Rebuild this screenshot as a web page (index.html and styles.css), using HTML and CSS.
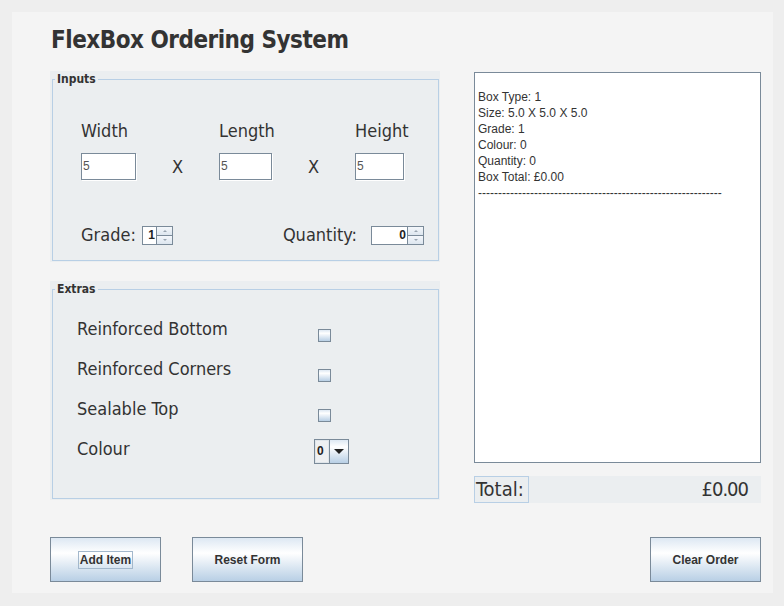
FILE: index.html
```html
<!DOCTYPE html>
<html>
<head>
<meta charset="utf-8">
<link rel="stylesheet" href="styles.css">
</head>
<body>
<div class="frame">
  <header class="header"><h1 class="title">FlexBox Ordering System</h1></header>
  <div class="main">
    <div class="left">
      <div class="panel panel-inputs">
        <fieldset class="group">
          <legend class="legend">Inputs</legend>
          <div class="dims">
            <span class="lbl">Width</span><span></span>
            <span class="lbl">Length</span><span></span>
            <span class="lbl">Height</span>
            <div class="field f-w">5</div><span class="times">X</span>
            <div class="field f-l">5</div><span class="times">X</span>
            <div class="field f-h">5</div>
          </div>
          <div class="spin-row">
            <div class="spin-group">
              <span class="lbl">Grade:</span>
              <div class="spinner sp-grade"><span class="sp-val">1</span><span class="sp-btns"><span class="sp-btn up"></span><span class="sp-btn down"></span></span></div>
            </div>
            <div class="spin-group">
              <span class="lbl">Quantity:</span>
              <div class="spinner sp-qty"><span class="sp-val">0</span><span class="sp-btns"><span class="sp-btn up"></span><span class="sp-btn down"></span></span></div>
            </div>
          </div>
        </fieldset>
      </div>
      <div class="panel panel-extras">
        <fieldset class="group">
          <legend class="legend">Extras</legend>
          <div class="extras">
            <div class="extra-row"><span class="lbl">Reinforced Bottom</span><span class="check"></span></div>
            <div class="extra-row"><span class="lbl">Reinforced Corners</span><span class="check"></span></div>
            <div class="extra-row"><span class="lbl">Sealable Top</span><span class="check"></span></div>
            <div class="extra-row"><span class="lbl">Colour</span><span class="combo"><span class="combo-val">0</span><span class="combo-btn"><span class="tri"></span></span></span></div>
          </div>
        </fieldset>
      </div>
    </div>
    <div class="right">
      <div class="order-text">
<pre class="order-pre">

Box Type: 1
Size: 5.0 X 5.0 X 5.0
Grade: 1
Colour: 0
Quantity: 0
Box Total: £0.00
-------------------------------------------------------------</pre>
      </div>
      <div class="total-row"><span class="total-lbl">Total:</span><span class="total-val">£0.00</span></div>
    </div>
  </div>
  <div class="buttons">
    <div class="btn-left">
      <button class="btn"><span class="focus">Add Item</span></button>
      <button class="btn">Reset Form</button>
    </div>
    <button class="btn">Clear Order</button>
  </div>
</div>
</body>
</html>
```
FILE: styles.css
```css
html, body { margin: 0; padding: 0; }
body {
  background: #eeeeee;
  font-family: "DejaVu Sans Condensed", "DejaVu Sans", sans-serif;
  color: #333333;
}
.frame {
  margin: 12px 0 0 12px;
  width: 761px;
  height: 581px;
  background: #f4f4f4;
  box-sizing: border-box;
  padding: 0 12px 0 38px;
  display: flex;
  flex-direction: column;
}
.header { height: 59px; }
.title {
  margin: 0;
  padding: 13px 0 0 1px;
  font-size: 24px;
  letter-spacing: -0.5px;
  line-height: 30px;
  font-weight: bold;
  color: #333333;
}
.main {
  display: grid;
  grid-template-columns: 390px 287px;
  column-gap: 34px;
}
.left { display: flex; flex-direction: column; gap: 19px; }
.panel {
  background: #ebeef0;
  padding: 0 1px 1px 2px;
  box-sizing: border-box;
}
.panel-inputs { height: 191px; }
.panel-extras { height: 219px; }
.group {
  margin: 0;
  padding: 0;
  border: 1px solid #b8cfe5;
  height: 100%;
  box-sizing: border-box;
  min-width: 0;
}
.legend {
  margin-left: 2px;
  padding: 0 2px 0 2px;
  font-size: 12px;
  line-height: 16px;
  font-weight: bold;
  color: #333333;
}
.lbl { font-size: 18px; line-height: 22px; color: #333333; }
.dims {
  display: grid;
  grid-template-columns: 55px 83px 53px 83px 49px;
  grid-template-rows: 22px 27px;
  row-gap: 11px;
  padding: 33px 0 0 28px;
}
.field {
  background: #fff;
  border: 1px solid #7a8a99;
  box-shadow: 1px 1px 0 #ffffff;
  height: 27px;
  box-sizing: border-box;
  font-family: "Liberation Sans", Arial, sans-serif;
  font-size: 12px;
  line-height: 25px;
  padding-left: 1px;
  color: #555555;
}
.times { text-align: center; font-size: 18px; line-height: 27px; }
.spin-row {
  display: flex;
  justify-content: space-between;
  padding: 44px 14px 0 28px;
}
.spin-group { display: flex; align-items: center; gap: 6px; }
.spinner {
  display: flex;
  height: 19px;
  border: 1px solid #7a8a99;
  box-sizing: border-box;
  background: #fff;
}
.sp-grade { width: 31px; }
.sp-qty { width: 53px; margin-left: 8px; }
.sp-val {
  flex: 1;
  text-align: right;
  font-family: "Liberation Sans", Arial, sans-serif;
  font-weight: bold;
  font-size: 12px;
  line-height: 17px;
  padding-right: 1px;
  color: #222;
}
.sp-btns { width: 16px; display: flex; flex-direction: column; border-left: 1px solid #7a8a99; box-sizing: border-box; }
.sp-btn {
  flex: 1;
  background: linear-gradient(#f4f7fb, #dde6ef);
  position: relative;
}
.sp-btn.up { border-bottom: 1px solid #7a8a99; }
.sp-btn::after {
  content: "";
  position: absolute;
  left: 6px;
  top: 3px;
  border-left: 2px solid transparent;
  border-right: 2px solid transparent;
}
.sp-btn.up::after { border-bottom: 2px solid #9aa6b2; }
.sp-btn.down::after { border-top: 2px solid #9aa6b2; }
.extras { padding: 21px 0 0 24px; display: flex; flex-direction: column; }
.extra-row { display: flex; align-items: flex-start; height: 40px; }
.extra-row .lbl { width: 241px; }
.check {
  margin-top: 11px;
  width: 13px;
  height: 13px;
  box-sizing: border-box;
  border: 1px solid #7a8a99;
  background: linear-gradient(#dde8f3, #ffffff 30%, #b8cfe5);
}
.combo {
  margin-left: -4px;
  margin-top: 1px;
  display: flex;
  width: 35px;
  height: 25px;
  border: 1px solid #7a8a99;
  box-sizing: border-box;
}
.combo-val {
  width: 14px;
  border: 1px solid #dfe5ea;
  box-sizing: border-box;
  background: #eef0f2;
  font-family: "Liberation Sans", Arial, sans-serif;
  font-weight: bold;
  font-size: 12px;
  line-height: 21px;
  padding-left: 1px;
  color: #222;
}
.combo-btn {
  flex: 1;
  border-left: 1px solid #7a8a99;
  background: linear-gradient(#dde8f3, #ffffff 30%, #b8cfe5);
  display: flex;
  align-items: center;
  justify-content: center;
}
.tri {
  width: 0; height: 0;
  border-left: 5px solid transparent;
  border-right: 5px solid transparent;
  border-top: 5px solid #222;
}
.right { display: flex; flex-direction: column; }
.order-text {
  margin-top: 1px;
  height: 391px;
  background: #fff;
  border: 1px solid #7a8a99;
  box-sizing: border-box;
  overflow: hidden;
}
.order-pre {
  margin: 0;
  padding: 0 0 0 3px;
  font-family: "Liberation Sans", Arial, sans-serif;
  font-size: 12px;
  line-height: 16px;
  color: #333;
}
.total-row {
  margin-top: 13px;
  height: 27px;
  background: #ebeef0;
  display: flex;
  justify-content: space-between;
  align-items: stretch;
}
.total-lbl {
  border: 1px solid #b8cfe5;
  width: 55px;
  box-sizing: border-box;
  padding-left: 1px;
  font-size: 20px;
  line-height: 25px;
}
.total-val { font-size: 20px; letter-spacing: -1px; line-height: 27px; padding-right: 13px; }
.buttons {
  margin-top: 34px;
  display: flex;
  justify-content: space-between;
}
.btn-left { display: flex; gap: 31px; }
.btn {
  width: 111px;
  height: 45px;
  border: 1px solid #7a8a99;
  background: linear-gradient(#dde8f3, #ffffff 35%, #b8cfe5);
  font-family: "Liberation Sans", Arial, sans-serif;
  font-weight: bold;
  font-size: 12px;
  color: #333;
  padding: 0;
  margin: 0;
}
.focus { border: 1px solid #a3b8cc; padding: 1px 1px; }
```
